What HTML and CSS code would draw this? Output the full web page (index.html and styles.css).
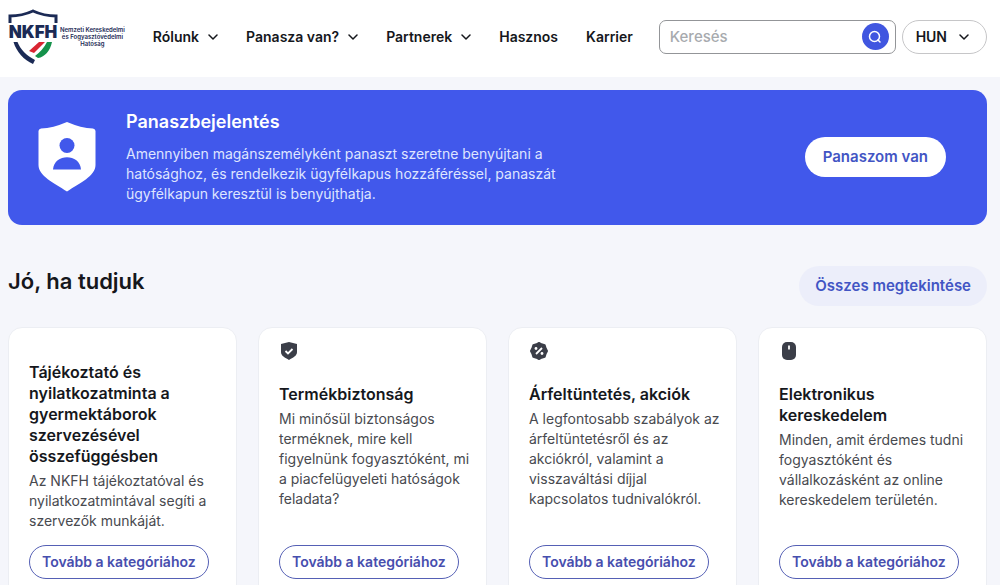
FILE: index.html
```html
<!DOCTYPE html>
<html lang="hu">
<head>
<meta charset="utf-8">
<meta name="viewport" content="width=device-width, initial-scale=1">
<title>NKFH</title>
<link rel="stylesheet" href="styles.css">
</head>
<body>
<header class="header">
  <a class="logo" href="#">
    <svg class="logo-mark" viewBox="0 0 50 56" aria-hidden="true">
      <path class="logo-line" d="M2 14V7Q14 7 25 2Q36 7 48 7V14"/>
      <text class="logo-letters" x="25" y="29" text-anchor="middle">NKFH</text>
      <path class="logo-navy" d="M5.500 33H9.500C12 40 19 47 27 51L25 55C16 51 8.500 43 5.500 33Z"/>
      <path class="logo-red" d="M31 33H37L26 44L21 42Z"/>
      <path class="logo-green" d="M39 33H44C42 42 37 48 30 49L27 47Q35 41 39 33Z"/>
    </svg>
    <span class="logo-text">Nemzeti Kereskedelmi<br>és Fogyasztóvédelmi<br>Hatóság</span>
  </a>
  <nav class="nav">
    <button class="nav-item" type="button">Rólunk <svg class="chevron" viewBox="0 0 10 10"><path d="M1 3L5 7L9 3"/></svg></button>
    <button class="nav-item" type="button">Panasza van? <svg class="chevron" viewBox="0 0 10 10"><path d="M1 3L5 7L9 3"/></svg></button>
    <button class="nav-item" type="button">Partnerek <svg class="chevron" viewBox="0 0 10 10"><path d="M1 3L5 7L9 3"/></svg></button>
    <a class="nav-item" href="#">Hasznos</a>
    <a class="nav-item" href="#">Karrier</a>
  </nav>
  <form class="search">
    <input class="search-input" type="text" placeholder="Keresés" aria-label="Keresés">
    <button class="search-button" type="button" aria-label="Keresés indítása">
      <svg class="search-icon" viewBox="0 0 14 14"><circle cx="6.500" cy="6.500" r="5"/><path d="M10 10L12 12"/></svg>
    </button>
  </form>
  <button class="language" type="button">HUN <svg class="chevron" viewBox="0 0 10 10"><path d="M1 3L5 7L9 3"/></svg></button>
</header>
<main class="main">
  <section class="banner">
    <svg class="banner-icon" viewBox="0 0 58 70" aria-hidden="true">
      <path fill="#fff" d="M29 0Q43 6 55 6.500Q57.500 7 57.500 9V43C57.500 54 42 61 29 69.500C16 61 .5 54 .5 43V9Q.5 7 3 6.500Q15 6 29 0Z"/>
      <circle class="banner-person" cx="29" cy="23.500" r="7.500"/>
      <path class="banner-person" d="M15 47.500C16 31 42 31 43 47.500Z"/>
    </svg>
    <div class="banner-body">
      <h2 class="banner-title">Panaszbejelentés</h2>
      <p class="banner-text">Amennyiben magánszemélyként panaszt szeretne benyújtani a hatósághoz, és rendelkezik ügyfélkapus hozzáféréssel, panaszát ügyfélkapun keresztül is benyújthatja.</p>
    </div>
    <a class="banner-link" href="#">Panaszom van</a>
  </section>
  <section>
    <div class="section-head">
      <h1 class="section-title">Jó, ha tudjuk</h1>
      <a class="all-link" href="#">Összes megtekintése</a>
    </div>
    <div class="cards">
      <article class="card card-plain">
        <h3 class="card-title">Tájékoztató és nyilatkozatminta a gyermektáborok szervezésével összefüggésben</h3>
        <p class="card-text">Az NKFH tájékoztatóval és nyilatkozatmintával segíti a szervezők munkáját.</p>
        <a class="card-link" href="#">Tovább a kategóriához</a>
      </article>
      <article class="card">
        <svg class="card-icon" viewBox="0 0 20 20" aria-hidden="true"><path class="icon-fill" d="M10 1L18 3V11C18 15 14 16.500 10 19C6 16.500 2 15 2 11V3Z"/><path class="icon-cut" d="M6.500 10L9 12.500L13.500 8"/></svg>
        <h3 class="card-title">Termékbiztonság</h3>
        <p class="card-text">Mi minősül biztonságos terméknek, mire kell figyelnünk fogyasztóként, mi a piacfelügyeleti hatóságok feladata?</p>
        <a class="card-link" href="#">Tovább a kategóriához</a>
      </article>
      <article class="card">
        <svg class="card-icon" viewBox="0 0 20 20" aria-hidden="true"><path class="icon-badge" d="M10 2L12.500 3.300L15.700 4.300L16.700 7.500L18 10L16.700 12.500L15.700 15.700L12.500 16.700L10 18L7.500 16.700L4.300 15.700L3.300 12.500L2 10L3.300 7.500L4.300 4.300L7.500 3.300Z"/><path class="icon-cut" d="M7 13L13 7"/><circle cx="7" cy="7.500" r="1.400" fill="#fff"/><circle cx="13" cy="12.500" r="1.400" fill="#fff"/></svg>
        <h3 class="card-title">Árfeltüntetés, akciók</h3>
        <p class="card-text">A legfontosabb szabályok az árfeltüntetésről és az akciókról, valamint a visszaváltási díjjal kapcsolatos tudnivalókról.</p>
        <a class="card-link" href="#">Tovább a kategóriához</a>
      </article>
      <article class="card">
        <svg class="card-icon" viewBox="0 0 20 20" aria-hidden="true"><rect class="icon-fill" x="3" y="1" width="14" height="18" rx="5"/><path class="icon-cut" d="M10 4.500V8.500"/></svg>
        <h3 class="card-title">Elektronikus kereskedelem</h3>
        <p class="card-text">Minden, amit érdemes tudni fogyasztóként és vállalkozásként az online kereskedelem területén.</p>
        <a class="card-link" href="#">Tovább a kategóriához</a>
      </article>
    </div>
  </section>
</main>
</body>
</html>
```
FILE: styles.css
```css
* { box-sizing: border-box; }
body {
  margin: 0;
  overflow-x: hidden;
  background: #f5f6fb;
  color: #15171c;
  font-family: Inter, "Liberation Sans", sans-serif;
  font-size: 14px;
  line-height: 20px;
}
h1, h2, h3, p { margin: 0; }
a { color: inherit; text-decoration: none; }
button { font: inherit; color: inherit; cursor: pointer; }
.header {
  display: flex;
  align-items: center;
  min-height: 77px;
  padding: 0 13px 4px 8px;
  background: #fff;
}
.logo { display: flex; align-items: center; gap: 2px; }
.logo-mark { width: 50px; height: 56px; flex: none; }
.logo-line { fill: none; stroke: #1b2a55; stroke-width: 3; }
.logo-letters { font-size: 17px; font-weight: 900; fill: #1b2a55; }
.logo-navy { fill: #1b2a55; }
.logo-red { fill: #d92532; }
.logo-green { fill: #15924b; }
.logo-text {
  color: #1b2a55;
  font-size: 6px;
  font-weight: 600;
  line-height: 7px;
  text-align: center;
  white-space: nowrap;
}
.nav { display: flex; gap: 28px; margin-left: 28px; }
.nav-item {
  display: flex;
  align-items: center;
  gap: 9px;
  padding: 0;
  border: 0;
  background: none;
  font-weight: 600;
  white-space: nowrap;
}
.chevron {
  width: 10px;
  height: 10px;
  fill: none;
  stroke: currentColor;
  stroke-width: 1.5;
  stroke-linecap: round;
  stroke-linejoin: round;
}
.search {
  display: flex;
  align-items: center;
  flex: 1;
  min-width: 0;
  height: 34px;
  margin-left: 26px;
  padding: 0 6px 0 10px;
  border: 1px solid #939598;
  border-radius: 7px;
  background: #fff;
}
.search-input {
  flex: 1;
  min-width: 0;
  padding: 0;
  border: 0;
  outline: 0;
  background: none;
  font: inherit;
  font-size: 15px;
  font-weight: 500;
}
.search-input::placeholder { color: #a7aaae; opacity: 1; }
.search-button {
  display: grid;
  place-items: center;
  width: 27px;
  height: 27px;
  padding: 0;
  border: 0;
  border-radius: 50%;
  background: #4056e0;
}
.search-icon { width: 14px; height: 14px; fill: none; stroke: #fff; stroke-width: 1.5; stroke-linecap: round; }
.language {
  display: flex;
  align-items: center;
  gap: 12px;
  height: 34px;
  margin-left: 6px;
  padding: 0 17px 0 13px;
  border: 1px solid #c6c6c8;
  border-radius: 17px;
  background: #fff;
  font-weight: 600;
}
.main { padding: 13px 13px 20px 8px; }
.banner {
  display: flex;
  align-items: center;
  min-height: 135px;
  padding: 19px 41px 21px 30px;
  border-radius: 14px;
  background: #4158eb;
  color: #fff;
}
.banner-icon { width: 58px; height: 70px; flex: none; }
.banner-person { fill: #4158eb; }
.banner-body { max-width: 460px; margin: 0 auto 0 30px; }
.banner-title { font-size: 18px; font-weight: 600; line-height: 24px; margin-bottom: 10px; }
.banner-text { color: #dfe5ff; }
.banner-link {
  flex: none;
  padding: 10px 18px;
  border-radius: 20px;
  background: #fff;
  color: #4255c4;
  font-size: 15px;
  font-weight: 600;
}
.section-head { display: flex; justify-content: space-between; align-items: center; margin: 41px 0 21px; }
.section-title { padding-bottom: 10px; font-size: 22px; font-weight: 600; line-height: 30px; }
.all-link {
  padding: 10px 16px;
  border-radius: 20px;
  background: #eceefa;
  color: #4255c4;
  font-size: 15px;
  font-weight: 600;
}
.cards { display: grid; grid-template-columns: repeat(4, minmax(0, 1fr)); gap: 21px; }
.card {
  display: flex;
  flex-direction: column;
  align-items: flex-start;
  padding: 13px 12px 20px 20px;
  border: 1px solid #eceef3;
  border-radius: 14px;
  background: #fff;
}
.card-plain { padding-top: 34px; }
.card-icon { width: 20px; height: 20px; margin-bottom: 23px; }
.icon-fill { fill: #3b3e48; }
.icon-badge { fill: #3b3e48; stroke: #3b3e48; stroke-width: 2; stroke-linejoin: round; }
.icon-cut { fill: none; stroke: #fff; stroke-width: 1.8; }
.card-title { margin-bottom: 4px; font-size: 16px; font-weight: 600; line-height: 21px; }
.card-plain .card-title { max-width: 180px; }
.card-text { margin-bottom: 14px; color: #484a4f; }
.card-link {
  margin-top: auto;
  padding: 6px 12px;
  border: 1px solid #5560b5;
  border-radius: 17px;
  color: #474eae;
  font-weight: 600;
  white-space: nowrap;
}
```
